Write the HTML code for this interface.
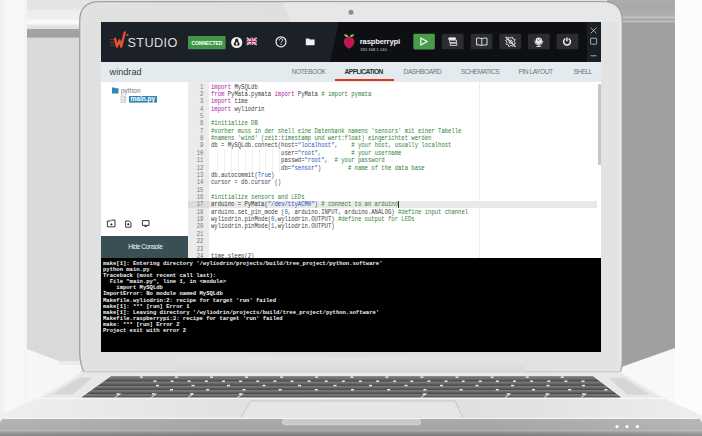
<!DOCTYPE html>
<html><head><meta charset="utf-8">
<style>
html,body{margin:0;padding:0;}
body{width:702px;height:436px;overflow:hidden;position:relative;background:#f8f8f8;font-family:"Liberation Sans",sans-serif;}
#bg{position:absolute;left:0;top:0;}
#screen{position:absolute;left:101px;top:22px;width:500px;height:330px;overflow:hidden;background:#fff;}
.abs{position:absolute;}
.tab{top:47.2px;font-size:6.6px;line-height:6.6px;color:#6e757a;letter-spacing:-0.45px;}
pre{margin:0;font-family:"Liberation Mono",monospace;}
.gut{font-size:6.3px;line-height:7.36px;transform:scaleX(0.8836);transform-origin:right top;color:#777;text-align:right;}
.code{font-size:6.3px;line-height:7.36px;transform:scaleX(0.8836);transform-origin:left top;color:#3c3c3c;}
.code i{font-style:normal;color:#a626a4;}
.code b{font-weight:normal;color:#2b7f36;}
.code u{text-decoration:none;color:#2a52c0;}
.con{font-size:6.1px;line-height:6.11px;transform:scaleX(0.9098);transform-origin:left top;color:#f4f4f4;font-weight:bold;}
</style></head>
<body>
<svg id="bg" width="702" height="436" viewBox="0 0 702 436">
  <defs>
    <linearGradient id="lstrip" x1="0" x2="1" y1="0" y2="0">
      <stop offset="0" stop-color="#f0f0f0"/><stop offset="0.3" stop-color="#f9f9f9"/><stop offset="0.8" stop-color="#f7f7f7"/><stop offset="1" stop-color="#f3f3f3"/>
    </linearGradient>
    <linearGradient id="topband" x1="0" x2="0" y1="0" y2="38" gradientUnits="userSpaceOnUse">
      <stop offset="0" stop-color="#e4e4e4"/><stop offset="0.24" stop-color="#e5e5e5"/><stop offset="0.27" stop-color="#ececec"/>
      <stop offset="0.5" stop-color="#f1f1f1"/><stop offset="0.55" stop-color="#fbfbfb"/><stop offset="0.63" stop-color="#f7f7f7"/><stop offset="0.66" stop-color="#e7e7e7"/>
      <stop offset="0.75" stop-color="#e0e0e0"/><stop offset="0.76" stop-color="#a3a3a3"/><stop offset="0.97" stop-color="#a1a1a1"/><stop offset="1" stop-color="#cacaca"/>
    </linearGradient>
    <linearGradient id="rtop" x1="0" x2="0" y1="0" y2="23" gradientUnits="userSpaceOnUse">
      <stop offset="0" stop-color="#acacac"/><stop offset="0.35" stop-color="#a9a9a9"/><stop offset="0.7" stop-color="#b0b0b0"/>
      <stop offset="0.76" stop-color="#c9c9c9"/><stop offset="0.82" stop-color="#a6a6a6"/><stop offset="0.88" stop-color="#a6a6a6"/><stop offset="0.92" stop-color="#c9c9c9"/><stop offset="1" stop-color="#a4a4a4"/>
    </linearGradient>
    <linearGradient id="band" x1="0" x2="0" y1="419" y2="436" gradientUnits="userSpaceOnUse">
      <stop offset="0" stop-color="#aaaaaa"/><stop offset="0.6" stop-color="#a5a5a5"/><stop offset="0.68" stop-color="#adadad"/><stop offset="0.78" stop-color="#939393"/><stop offset="1" stop-color="#767676"/>
    </linearGradient>
    <linearGradient id="front" x1="0" x2="702" y1="0" y2="0" gradientUnits="userSpaceOnUse">
      <stop offset="0" stop-color="#efefef"/><stop offset="0.3" stop-color="#e3e3e3"/><stop offset="0.5" stop-color="#dedede"/><stop offset="0.75" stop-color="#e2e2e2"/><stop offset="1" stop-color="#eeeeee"/>
    </linearGradient>
    <linearGradient id="keys" x1="0" x2="0" y1="0" y2="1">
      <stop offset="0" stop-color="#404040"/><stop offset="0.25" stop-color="#7a7a7a"/><stop offset="0.65" stop-color="#686868"/><stop offset="1" stop-color="#4a4a4a"/>
    </linearGradient>
    <linearGradient id="bezel" x1="0" x2="1" y1="0" y2="0">
      <stop offset="0" stop-color="#e1e1e1"/><stop offset="0.5" stop-color="#dedede"/><stop offset="1" stop-color="#e3e3e3"/>
    </linearGradient>
    <linearGradient id="bandh" x1="0" x2="702" y1="0" y2="0" gradientUnits="userSpaceOnUse">
      <stop offset="0" stop-color="#fff" stop-opacity="0.12"/><stop offset="0.3" stop-color="#fff" stop-opacity="0"/><stop offset="0.7" stop-color="#fff" stop-opacity="0"/><stop offset="1" stop-color="#fff" stop-opacity="0.16"/>
    </linearGradient>
    <linearGradient id="hinge" x1="0" x2="0" y1="357" y2="372" gradientUnits="userSpaceOnUse">
      <stop offset="0" stop-color="#e6e6e6"/><stop offset="1" stop-color="#d9d9d9"/>
    </linearGradient>
    <clipPath id="kbclip"><polygon points="111,376.6 593,376.6 621,397.5 81.5,397.5"/></clipPath>
  </defs>
  <!-- left background -->
  <rect x="0" y="0" width="27" height="436" fill="url(#lstrip)"/>
  <rect x="27" y="0" width="53" height="436" fill="#f6f6f6"/>
  <polygon points="27,0 80,0 80,361.5 60,361.5 27,349" fill="#d9d9d9"/>
  <rect x="27" y="0" width="75" height="38" fill="url(#topband)"/>
  <rect x="60" y="361.5" width="20" height="3.5" fill="#ececec"/>
  <!-- right background -->
  <rect x="675" y="0" width="27" height="436" fill="#fcfcfc"/>
  <polygon points="600,0 675,0 675,348 620,367.5 600,367.5" fill="#a0a0a0"/>
  <rect x="600" y="0" width="75" height="23" fill="url(#rtop)"/>
  
  <!-- lid -->
  <rect x="95" y="0" width="512" height="4" fill="#e4e4e4"/>
  <path d="M79.7,352 L79.7,21.5 Q79.7,1.7 99.5,1.7 L602.5,1.7 Q622.3,1.7 622.3,21.5 L622.3,358 Q622.3,372 619,372 L84,372 Q80.2,366 79.7,352 Z" fill="url(#bezel)" stroke="#a2a2a2" stroke-width="1.3"/>
  <path d="M81.6,22 L81.6,360" stroke="#e9e9e9" stroke-width="1"/>
  <path d="M620.3,22 L620.3,362" stroke="#efefef" stroke-width="1.2"/>
  <path d="M283,2.4 L603,2.4 Q620.9,2.4 620.9,20.5 L620.9,22 L290,22 Z" fill="#e7e7e7"/>
  <circle cx="351" cy="12.3" r="2.5" fill="#8d8d8d"/>
  <path d="M177,372 L177,360 Q177,357 180,357 L522,357 Q525,357 525,360 L525,372 Z" fill="url(#hinge)"/>
  <rect x="80" y="371.2" width="542" height="1" fill="#d4d4d4"/>
  <!-- deck -->
  <polygon points="81,372.2 621,372.2 664,398.6 38,398.6" fill="#e8e8e8"/>
  <polyline points="81,373 38,398.6" fill="none" stroke="#f6f6f6" stroke-width="1"/>
  <polyline points="621,373 664,398.6" fill="none" stroke="#f2f2f2" stroke-width="1"/>
  <polygon points="79.5,377.6 93,377.6 72.7,394.5 52,394.5" fill="#d6d6d6"/>
  <polygon points="609,378 624,378 650,394.8 627,394.8" fill="#d6d6d6"/>
  <polygon points="111,376.6 593,376.6 621,397.5 81.5,397.5" fill="#555"/>
  <g clip-path="url(#kbclip)">
    <rect x="80" y="376.6" width="545" height="4.2" fill="url(#keys)"/>
    <rect x="80" y="380.8" width="545" height="4.3" fill="url(#keys)"/>
    <rect x="80" y="385.1" width="545" height="4.2" fill="url(#keys)"/>
    <rect x="80" y="389.3" width="545" height="4.2" fill="url(#keys)"/>
    <rect x="80" y="393.5" width="545" height="4.0" fill="url(#keys)"/>
  </g>
  <g fill="#e9e9e9">
    <polygon points="120.0,393.4 121.4,393.4 115.8,397.6 114.4,397.6"/><polygon points="156.0,393.4 157.4,393.4 151.8,397.6 150.4,397.6"/><polygon points="193.0,393.4 194.4,393.4 188.8,397.6 187.4,397.6"/><polygon points="242.5,393.4 243.9,393.4 238.3,397.6 236.9,397.6"/><polygon points="426.0,393.4 427.4,393.4 421.8,397.6 420.4,397.6"/><polygon points="510.0,393.4 511.4,393.4 505.8,397.6 504.4,397.6"/><polygon points="549.0,393.4 550.4,393.4 544.8,397.6 543.4,397.6"/><polygon points="586.0,393.4 587.4,393.4 581.8,397.6 580.4,397.6"/>
    <rect x="139.8" y="376.4" width="3" height="1.5"/>
    <rect x="174.9" y="376.4" width="3" height="1.5"/>
    <rect x="210.0" y="376.4" width="3" height="1.5"/>
    <rect x="245.0" y="376.4" width="3" height="1.5"/>
    <rect x="280.1" y="376.4" width="3" height="1.5"/>
    <rect x="315.2" y="376.4" width="3" height="1.5"/>
    <rect x="350.3" y="376.4" width="3" height="1.5"/>
    <rect x="385.4" y="376.4" width="3" height="1.5"/>
    <rect x="420.4" y="376.4" width="3" height="1.5"/>
    <rect x="455.5" y="376.4" width="3" height="1.5"/>
    <rect x="490.6" y="376.4" width="3" height="1.5"/>
    <rect x="525.7" y="376.4" width="3" height="1.5"/>
    <rect x="560.8" y="376.4" width="3" height="1.5"/>
    <rect x="153.5" y="380.5" width="3" height="1.5"/>
    <rect x="170.6" y="380.5" width="3" height="1.5"/>
    <rect x="187.7" y="380.5" width="3" height="1.5"/>
    <rect x="204.9" y="380.5" width="3" height="1.5"/>
    <rect x="222.0" y="380.5" width="3" height="1.5"/>
    <rect x="239.1" y="380.5" width="3" height="1.5"/>
    <rect x="256.2" y="380.5" width="3" height="1.5"/>
    <rect x="273.3" y="380.5" width="3" height="1.5"/>
    <rect x="290.5" y="380.5" width="3" height="1.5"/>
    <rect x="307.6" y="380.5" width="3" height="1.5"/>
    <rect x="324.7" y="380.5" width="3" height="1.5"/>
    <rect x="341.8" y="380.5" width="3" height="1.5"/>
    <rect x="358.9" y="380.5" width="3" height="1.5"/>
    <rect x="376.1" y="380.5" width="3" height="1.5"/>
    <rect x="393.2" y="380.5" width="3" height="1.5"/>
    <rect x="410.3" y="380.5" width="3" height="1.5"/>
    <rect x="427.4" y="380.5" width="3" height="1.5"/>
    <rect x="444.5" y="380.5" width="3" height="1.5"/>
    <rect x="461.7" y="380.5" width="3" height="1.5"/>
    <rect x="478.8" y="380.5" width="3" height="1.5"/>
    <rect x="495.9" y="380.5" width="3" height="1.5"/>
    <rect x="513.0" y="380.5" width="3" height="1.5"/>
    <rect x="530.1" y="380.5" width="3" height="1.5"/>
    <rect x="547.3" y="380.5" width="3" height="1.5"/>
    <rect x="564.4" y="380.5" width="3" height="1.5"/>
    <rect x="581.5" y="380.5" width="3" height="1.5"/>
    <rect x="156.0" y="384.8" width="3" height="1.5"/>
    <rect x="191.5" y="384.8" width="3" height="1.5"/>
    <rect x="227.0" y="384.8" width="3" height="1.5"/>
    <rect x="262.5" y="384.8" width="3" height="1.5"/>
    <rect x="298.0" y="384.8" width="3" height="1.5"/>
    <rect x="333.5" y="384.8" width="3" height="1.5"/>
    <rect x="369.0" y="384.8" width="3" height="1.5"/>
    <rect x="404.5" y="384.8" width="3" height="1.5"/>
    <rect x="440.0" y="384.8" width="3" height="1.5"/>
    <rect x="475.5" y="384.8" width="3" height="1.5"/>
    <rect x="511.0" y="384.8" width="3" height="1.5"/>
    <rect x="546.5" y="384.8" width="3" height="1.5"/>
    <rect x="582.0" y="384.8" width="3" height="1.5"/>
    <rect x="170.0" y="389.0" width="3" height="1.5"/>
    <rect x="206.2" y="389.0" width="3" height="1.5"/>
    <rect x="242.4" y="389.0" width="3" height="1.5"/>
    <rect x="278.6" y="389.0" width="3" height="1.5"/>
    <rect x="314.8" y="389.0" width="3" height="1.5"/>
    <rect x="351.0" y="389.0" width="3" height="1.5"/>
    <rect x="387.2" y="389.0" width="3" height="1.5"/>
    <rect x="423.4" y="389.0" width="3" height="1.5"/>
    <rect x="459.6" y="389.0" width="3" height="1.5"/>
    <rect x="495.8" y="389.0" width="3" height="1.5"/>
    <rect x="532.0" y="389.0" width="3" height="1.5"/>
    <rect x="568.2" y="389.0" width="3" height="1.5"/>
    <rect x="604.4" y="389.0" width="3" height="1.5"/>
    <rect x="116.5" y="393.2" width="3" height="1.5"/>
    <rect x="152.0" y="393.2" width="3" height="1.5"/>
    <rect x="190.0" y="393.2" width="3" height="1.5"/>
    <rect x="239.0" y="393.2" width="3" height="1.5"/>
    <rect x="422.8" y="393.2" width="3" height="1.5"/>
    <rect x="506.7" y="393.2" width="3" height="1.5"/>
    <rect x="545.5" y="393.2" width="3" height="1.5"/>
    <rect x="582.0" y="393.2" width="3" height="1.5"/>
  </g>
  <!-- front -->
  <polygon points="38,398.2 664,398.2 702,415.5 702,419 0,419 0,415" fill="url(#front)"/>
  <polyline points="38,398.4 664,398.4" fill="none" stroke="#f8f8f8" stroke-width="1.2"/>
  <polygon points="241,417.5 250.5,401 455,401 463,417.5" fill="#e6e6e6"/>
  <polyline points="241,417.5 250.5,401 455,401 463,417.5" fill="none" stroke="#c2c2c2" stroke-width="0.9"/>
  <path d="M6,418.6 L696,418.6 Q702,418.6 702,424 L702,436 L0,436 L0,424 Q0,418.6 6,418.6 Z" fill="url(#band)"/>
  <path d="M6,418.6 L696,418.6 Q702,418.6 702,424 L702,436 L0,436 L0,424 Q0,418.6 6,418.6 Z" fill="url(#bandh)"/>
  <path d="M4,418.4 L698,418.4" stroke="#f4f4f4" stroke-width="1.2"/>
  <path d="M285,419.2 L418,419.2 Q420.5,419.2 420.5,422 Q420.5,424.8 418,424.8 L285,424.8 Q282.5,424.8 282.5,422 Q282.5,419.2 285,419.2 Z" fill="#c9c9c9" stroke="#e8e8e8" stroke-width="0.6"/>
  <circle cx="617" cy="426.6" r="1.6" fill="#fff"/>
  <circle cx="627" cy="426.6" r="1.6" fill="#fff"/>
  <circle cx="637.4" cy="426.6" r="1.6" fill="#fff"/>
</svg>
<div id="screen">
  <!-- header -->
  <div class="abs" style="left:0;top:0;width:500px;height:39.6px;background:#0d0f12;"></div>
  <div class="abs" style="left:0;top:0;width:500px;height:39.6px;background:#1b2029;clip-path:polygon(0 0,238px 0,229px 40px,0 40px);"></div>
  <div class="abs" style="left:485.5px;top:0;width:14.5px;height:39.6px;background:#1a1f26;"></div>
  <svg class="abs" style="left:0;top:0" width="500" height="40" viewBox="0 0 500 40">
    <!-- logo W -->
    <g fill="none" stroke="#e9502b" stroke-linecap="round" stroke-linejoin="round">
      <path d="M14,16.6 L15.9,24.6 L18.5,18.4 L20.2,24.6 L23.8,10.4" stroke-width="2.3"/>
      <path d="M9.6,17.6 L12.4,17.6 M9.2,20.3 L12.9,20.3 M9.5,23 L13.3,23" stroke-width="0.8" opacity="0.65"/>
    </g>
    <circle cx="26.4" cy="13" r="1.1" fill="#e9502b"/>
    <!-- connected badge -->
    <rect x="87" y="14" width="37.6" height="13.3" rx="1" fill="#419647"/>
    <!-- linux circle -->
    <circle cx="135.7" cy="20.5" r="5.6" fill="#f2f2f2"/>
    <path d="M135.7,16.5 c-1.3,0 -1.6,1.2 -1.6,2.4 c0,1 -1.4,2 -1.4,3.4 c0,0.8 0.8,1.3 1.4,1.3 l3.2,0 c0.6,0 1.4,-0.5 1.4,-1.3 c0,-1.4 -1.4,-2.4 -1.4,-3.4 c0,-1.2 -0.3,-2.4 -1.6,-2.4z" fill="#222"/>
    <path d="M134.6,23.6 l-1.2,0.6 l1.2,0.3z M136.8,23.6 l1.2,0.6 l-1.2,0.3z" fill="#f0b020"/>
    <ellipse cx="135.7" cy="21.6" rx="0.9" ry="1.4" fill="#fff"/>
    <!-- UK flag -->
    <g transform="translate(145.8,15.8) scale(0.94)">
      <rect width="10.4" height="7.6" fill="#2a3e8f"/>
      <path d="M0,0 L10.4,7.6 M10.4,0 L0,7.6" stroke="#fff" stroke-width="1.6"/>
      <path d="M0,0 L10.4,7.6 M10.4,0 L0,7.6" stroke="#d0253a" stroke-width="0.6"/>
      <path d="M5.2,0 V7.6 M0,3.8 H10.4" stroke="#fff" stroke-width="2.2"/>
      <path d="M5.2,0 V7.6 M0,3.8 H10.4" stroke="#d0253a" stroke-width="1.2"/>
    </g>
    <!-- help -->
    <circle cx="180" cy="19.8" r="5" fill="none" stroke="#f0f0f0" stroke-width="1.2"/>
    <path d="M178.3,18.4 c0,-1.2 0.8,-1.8 1.7,-1.8 c1,0 1.7,0.6 1.7,1.5 c0,1.2 -1.6,1.3 -1.6,2.6" fill="none" stroke="#f0f0f0" stroke-width="1"/>
    <circle cx="180.1" cy="22.4" r="0.6" fill="#f0f0f0"/>
    <!-- folder -->
    <path d="M204.8,16.4 h3.2 l0.8,1 h4.8 v5.8 h-8.8z" fill="#f0f0f0"/>
    <!-- raspberry -->
    <path d="M243,12.4 c1.6,-0.6 3.6,0.2 4.8,2.2 c-1.8,0.8 -4,0.2 -4.8,-2.2z M253.2,12.4 c-1.6,-0.6 -3.6,0.2 -4.8,2.2 c1.8,0.8 4,0.2 4.8,-2.2z" fill="#7cc243"/>
    <path d="M248.1,15 c1.6,0 2.8,0.6 3.8,1.4 c1.2,1 1.6,2.4 1.4,3.8 c-0.2,1.6 -0.8,2.8 -1.8,4 c-1,1.2 -2.2,2.2 -3.4,2.2 c-1.2,0 -2.4,-1 -3.4,-2.2 c-1,-1.2 -1.6,-2.4 -1.8,-4 c-0.2,-1.4 0.2,-2.8 1.4,-3.8 c1,-0.8 2.2,-1.4 3.8,-1.4z" fill="#d5195b"/>
    <g fill="none" stroke="#8f0f3a" stroke-width="0.45">
      <circle cx="246.4" cy="17.6" r="1.2"/><circle cx="249.8" cy="17.6" r="1.2"/>
      <circle cx="244.6" cy="20.4" r="1.2"/><circle cx="248.1" cy="20.2" r="1.3"/><circle cx="251.6" cy="20.4" r="1.2"/>
      <circle cx="246.3" cy="23.2" r="1.2"/><circle cx="249.9" cy="23.2" r="1.2"/>
      <circle cx="248.1" cy="25.6" r="1"/>
    </g>
    <!-- play -->
    <rect x="312.3" y="11.7" width="21.5" height="15.7" rx="1.3" fill="#4a9b4b"/>
    <path d="M319.8,16 L326.2,19.5 L319.8,23 Z" fill="none" stroke="#fff" stroke-width="1.1" stroke-linejoin="round"/>
    <!-- buttons -->
    <g fill="#2b2d31">
      <rect x="340.9" y="11.7" width="21.7" height="15.5" rx="1.2"/>
      <rect x="369.7" y="11.7" width="21.7" height="15.5" rx="1.2"/>
      <rect x="398.4" y="11.7" width="21.7" height="15.5" rx="1.2"/>
      <rect x="426.9" y="11.7" width="21.7" height="15.5" rx="1.2"/>
      <rect x="455.6" y="11.7" width="21.7" height="15.5" rx="1.2"/>
    </g>
    <g fill="none" stroke="#f0f0f0" stroke-width="0.9">
      <!-- db/list icon -->
      <path d="M347.8,15.9 h6.6 v1.5 h-6.6z" fill="#f0f0f0"/>
      <path d="M348.6,18.2 h7 v2.4 h-7z M349.2,21.2 h6.6 v2.2 h-6.6z" stroke-width="0.8"/>
      <!-- book -->
      <path d="M375.6,16.2 q2.6,-0.6 5.2,0.4 q2.6,-1 5.2,-0.4 v6.8 q-2.6,-0.4 -4.6,0.4 h-1.2 q-2,-0.8 -4.6,-0.4z M380.8,16.6 v6.8" stroke-width="0.9"/>
      <!-- gear slash -->
      <path d="M414.40,20.77 L414.12,21.69 L412.67,21.87 L412.21,22.43 L412.31,23.88 L411.46,24.33 L410.31,23.43 L409.59,23.50 L408.63,24.60 L407.71,24.32 L407.53,22.87 L406.97,22.41 L405.52,22.51 L405.07,21.66 L405.97,20.51 L405.90,19.79 L404.80,18.83 L405.08,17.91 L406.53,17.73 L406.99,17.17 L406.89,15.72 L407.74,15.27 L408.89,16.17 L409.61,16.10 L410.57,15.00 L411.49,15.28 L411.67,16.73 L412.23,17.19 L413.68,17.09 L414.13,17.94 L413.23,19.09 L413.30,19.81Z" stroke-width="0.9"/>
      <circle cx="409.6" cy="19.8" r="1.7" stroke-width="0.9"/>
      <path d="M404.6,14.8 L414.6,24.8" stroke-width="1.1"/>
      <!-- globe -->
      <circle cx="437.8" cy="18.8" r="3.2" fill="#f0f0f0" stroke="none"/>
      <path d="M436.2,17.5 c1,0.4 1.4,1.2 1,2 M438.6,16.4 c0.6,0.8 0.4,1.6 -0.2,2" stroke="#2b2d31" stroke-width="0.7"/>
      <path d="M433.8,18.8 a4,4 0 0 0 8,0 M437.8,22.8 v1.4 M435.4,24.4 h4.8" stroke-width="0.9"/>
      <!-- power -->
      <path d="M464.4,16.6 a3.4,3.4 0 1 0 3.2,0" stroke-width="1.5"/>
      <path d="M466,15.6 v3.6" stroke-width="1.4"/>
    </g>
    <!-- window controls -->
    <g stroke="#c8ccd0" stroke-width="0.8" fill="none">
      <path d="M489.6,5.6 L495.6,11.4 M495.6,5.6 L489.6,11.4"/>
      <rect x="489.6" y="16.2" width="6" height="6" rx="0.6"/>
      <path d="M489.6,33.8 h6"/>
    </g>
  </svg>
  <div class="abs" style="left:26.4px;top:15px;font-size:12.7px;line-height:12.7px;color:#dedede;letter-spacing:0.4px;">STUDIO</div>
  <div class="abs" style="left:87px;top:14.6px;width:37.6px;height:13.5px;font-size:5px;line-height:13.5px;letter-spacing:-0.1px;color:#fff;font-weight:bold;text-align:center;">CONNECTED</div>
  <div class="abs" style="left:258.8px;top:15.7px;font-size:7.6px;line-height:7.6px;color:#f4f4f4;font-weight:bold;letter-spacing:-0.15px;">raspberrypi</div>
  <div class="abs" style="left:259px;top:26.4px;font-size:4.4px;line-height:4.4px;color:#c4c4c4;letter-spacing:-0.1px;">192.168.1.140</div>
  <!-- tab bar -->
  <div class="abs" style="left:0;top:39.6px;width:500px;height:20.4px;background:#e3ebee;"></div>
  <div class="abs" style="left:8.6px;top:46px;font-size:9.15px;line-height:9.15px;color:#3a3a3a;">windrad</div>
  <div class="abs tab" style="left:190.8px;">NOTEBOOK</div>
  <div class="abs tab" style="left:243.6px;color:#2c2f33;font-weight:bold;letter-spacing:-0.55px;">APPLICATION</div>
  <div class="abs tab" style="left:302.6px;">DASHBOARD</div>
  <div class="abs tab" style="left:360px;">SCHEMATICS</div>
  <div class="abs tab" style="left:417.4px;">PIN LAYOUT</div>
  <div class="abs tab" style="left:472.4px;">SHELL</div>
  <div class="abs" style="left:234.4px;top:57.2px;width:58.6px;height:2.2px;background:#e5321c;"></div>
  <!-- sidebar -->
  <svg class="abs" style="left:0;top:60px" width="87" height="176" viewBox="0 0 87 176">
    <path d="M11,5.4 h2.6 l0.7,0.8 h3.2 v5.4 h-6.5z" fill="#2f87b3"/>
    <path d="M20.1,14 h3.2 l1.4,1.4 v5 h-4.6z M23.3,14 v1.4 h1.4 M21,17 h2.8 M21,18.4 h2.8" fill="none" stroke="#9aa0a5" stroke-width="0.6"/>
    <rect x="28" y="14" width="28" height="6.6" fill="#2f87b3"/>
    <g fill="none" stroke="#222" stroke-width="0.9">
      <path d="M6.4,139 h3 l1,-0.9 h3.6 v6.7 h-7.6z"/>
      <path d="M24.6,139 h3.6 l1.8,1.8 v4.4 h-5.4z"/>
      <circle cx="27.3" cy="142.3" r="0.7" fill="#222"/>
      <path d="M41.4,138.6 h6.6 v4.8 h-6.6z M43.4,144.4 h2.6"/>
      <circle cx="10.4" cy="142.4" r="0.6" fill="#222"/>
    </g>
  </svg>
  <div class="abs" style="left:20px;top:65.8px;font-size:6.5px;line-height:6.5px;color:#777;">python</div>
  <div class="abs" style="left:29.6px;top:74.2px;font-size:6.5px;line-height:6.5px;color:#fff;font-weight:bold;">main.py</div>
  <div class="abs" style="left:0;top:214px;width:87px;height:22px;background:#3a4f55;color:#f4f6f6;font-size:6.5px;line-height:22.4px;text-align:center;letter-spacing:-0.4px;padding-left:1.5px;box-sizing:border-box;">Hide Console</div>
  <!-- editor -->
  <div class="abs" style="left:87.3px;top:60px;width:20.7px;height:176px;background:#ebebeb;"></div>
  <div class="abs" style="left:87.3px;top:178.9px;width:409px;height:7.36px;background:#e9e9e9;"></div>
  <div class="abs" style="left:87.3px;top:178.9px;width:20.7px;height:7.36px;background:#dcdcdc;"></div>
  <div class="abs" style="left:297.2px;top:179.4px;width:0.7px;height:6.6px;background:#333;"></div>
  <div class="abs" style="left:116px;top:127.8px;width:1px;height:22.1px;background:#efefef;"></div><div class="abs" style="left:123px;top:127.8px;width:1px;height:22.1px;background:#efefef;"></div><div class="abs" style="left:130px;top:127.8px;width:1px;height:22.1px;background:#efefef;"></div><div class="abs" style="left:137px;top:127.8px;width:1px;height:22.1px;background:#efefef;"></div><div class="abs" style="left:144px;top:127.8px;width:1px;height:22.1px;background:#efefef;"></div><div class="abs" style="left:151px;top:127.8px;width:1px;height:22.1px;background:#efefef;"></div><div class="abs" style="left:158px;top:127.8px;width:1px;height:22.1px;background:#efefef;"></div><div class="abs" style="left:164px;top:127.8px;width:1px;height:22.1px;background:#efefef;"></div><div class="abs" style="left:171px;top:127.8px;width:1px;height:22.1px;background:#efefef;"></div><div class="abs" style="left:178px;top:127.8px;width:1px;height:22.1px;background:#efefef;"></div>
  <div class="abs" style="left:377.6px;top:60px;width:1px;height:176px;background:#ececec;"></div>
  <div class="abs" style="left:497.2px;top:62px;width:2.6px;height:80.6px;background:#c6c6c6;border-radius:1px;"></div>
  <pre class="abs gut" style="left:87.3px;top:61.6px;width:15.4px;">1
2
3
4
5
6
7
8
9
10
11
12
13
14
15
16
17
18
19
20
21
22
23
24</pre>
  <pre class="abs code" style="left:110.4px;top:61.6px;"><i>import</i> MySQLdb
<i>from</i> PyMata.pymata <i>import</i> PyMata <b># import pymata</b>
<i>import</i> time
<i>import</i> wyliodrin

<b>#initialize DB</b>
<b>#vorher muss in der shell eine Datenbank namens 'sensors' mit einer Tabelle</b>
<b>#namens 'wind' (zeit:timestamp und wert:float) eingerichtet werden</b>
db = MySQLdb.connect(host=<u>"localhost"</u>,    <b># your host, usually localhost</b>
                     user=<u>"root"</u>,         <b># your username</b>
                     passwd=<u>"root"</u>,  <b># your password</b>
                     db=<u>"sensor"</u>)        <b># name of the data base</b>
db.autocommit(<u>True</u>)
cursor = db.cursor ()

<b>#initialize sensors and LEDs</b>
arduino = PyMata(<u>"/dev/ttyACM0"</u>) <b># connect to an arduino</b>
arduino.set_pin_mode (<u>0</u>, arduino.INPUT, arduino.ANALOG) <b>#define input channel</b>
wyliodrin.pinMode(<u>0</u>,wyliodrin.OUTPUT) <b>#define output for LEDs</b>
wyliodrin.pinMode(<u>1</u>,wyliodrin.OUTPUT)



time.sleep(<u>2</u>)</pre>
  <!-- console -->
  <div class="abs" style="left:0;top:236px;width:500px;height:94px;background:#000;"></div>
  <pre class="abs con" style="left:2.2px;top:238.9px;">make[1]: Entering directory '/wyliodrin/projects/build/tree_project/python.software'
python main.py
Traceback (most recent call last):
  File "main.py", line 1, in &lt;module&gt;
    import MySQLdb
ImportError: No module named MySQLdb
Makefile.wyliodrin:2: recipe for target 'run' failed
make[1]: *** [run] Error 1
make[1]: Leaving directory '/wyliodrin/projects/build/tree_project/python.software'
Makefile.raspberrypi:3: recipe for target 'run' failed
make: *** [run] Error 2
Project exit with error 2</pre>
</div>
</body></html>
